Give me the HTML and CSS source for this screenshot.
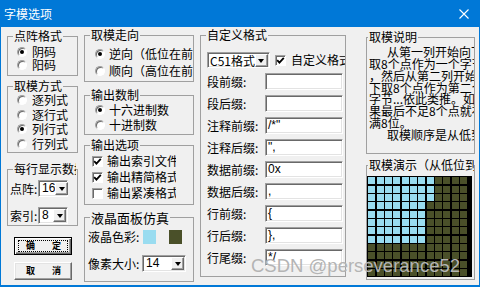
FILE: index.html
```html
<!DOCTYPE html>
<html lang="zh-CN">
<head>
<meta charset="utf-8">
<title>字模选项</title>
<link rel="stylesheet" href="styles.css">
</head>
<body>
<div class="window">
  <div class="titlebar">
    <span class="title">字模选项</span>
    <svg class="close" width="10" height="10" viewBox="0 0 10 10"><path d="M0.5 0.5 L9.5 9.5 M9.5 0.5 L0.5 9.5" stroke="#fff" stroke-width="1.1" fill="none"/></svg>
  </div>
  <div class="client">
    <div class="col col1">
      <fieldset class="g">
        <legend>点阵格式</legend>
        <div class="body b-dot">
          <div class="opt"><span class="radio on"></span>阴码</div>
          <div class="opt"><span class="radio"></span>阳码</div>
        </div>
      </fieldset>
      <fieldset class="g g-mode">
        <legend>取模方式</legend>
        <div class="body b-mode">
          <div class="opt"><span class="radio"></span>逐列式</div>
          <div class="opt"><span class="radio"></span>逐行式</div>
          <div class="opt"><span class="radio on"></span>列行式</div>
          <div class="opt"><span class="radio"></span>行列式</div>
        </div>
      </fieldset>
      <fieldset class="g g-row">
        <legend class="clip">每行显示数据</legend>
        <div class="body b-row">
          <div class="fld"><span class="lbl">点阵:</span><div class="select s-small"><span class="val">16</span><span class="drop"></span></div></div>
          <div class="fld f2"><span class="lbl">索引:</span><div class="select s-small"><span class="val">8</span><span class="drop"></span></div></div>
        </div>
      </fieldset>
      <div class="buttons">
        <div class="btn default"><div class="focus"><span>确</span><span>定</span></div></div>
        <div class="btn"><div class="focus nofocus"><span>取</span><span>消</span></div></div>
      </div>
    </div>

    <div class="col col2">
      <fieldset class="g">
        <legend>取模走向</legend>
        <div class="body b-dir">
          <div class="opt"><span class="radio on"></span>逆向（低位在前）</div>
          <div class="opt"><span class="radio"></span>顺向（高位在前）</div>
        </div>
      </fieldset>
      <fieldset class="g g-num">
        <legend>输出数制</legend>
        <div class="body b-num">
          <div class="opt"><span class="radio on"></span>十六进制数</div>
          <div class="opt"><span class="radio"></span>十进制数</div>
        </div>
      </fieldset>
      <fieldset class="g g-out">
        <legend>输出选项</legend>
        <div class="body b-out">
          <div class="opt"><span class="cb"><svg width="9" height="9" viewBox="0 0 9 9"><path d="M1.2 4.2 L3.4 6.6 L7.8 1.8" stroke="#000" stroke-width="1.8" fill="none"/></svg></span>输出索引文件</div>
          <div class="opt"><span class="cb"><svg width="9" height="9" viewBox="0 0 9 9"><path d="M1.2 4.2 L3.4 6.6 L7.8 1.8" stroke="#000" stroke-width="1.8" fill="none"/></svg></span>输出精简格式</div>
          <div class="opt"><span class="cb"></span>输出紧凑格式</div>
        </div>
      </fieldset>
      <fieldset class="g g-lcd">
        <legend class="big">液晶面板仿真</legend>
        <div class="body b-lcd">
          <div class="lcdrow"><span class="lbl2">液晶色彩:</span><span class="sw light"></span><span class="sw dark"></span></div>
          <div class="lcdrow r2"><span class="lbl2">像素大小:</span><div class="select s-px"><span class="val">14</span><span class="drop"></span></div></div>
        </div>
      </fieldset>
    </div>

    <div class="col col3">
      <fieldset class="g g-custom">
        <legend>自定义格式</legend>
        <div class="body b-custom">
          <div class="toprow">
            <div class="select s-fmt"><span class="val cjk">C51格式</span><span class="drop"></span></div>
            <span class="cb"><svg width="9" height="9" viewBox="0 0 9 9"><path d="M1.2 4.2 L3.4 6.6 L7.8 1.8" stroke="#000" stroke-width="1.8" fill="none"/></svg></span>
            <span class="cblbl">自定义格式</span>
          </div>
          <div class="frow"><span class="flbl">段前缀:</span><span class="input"></span></div>
          <div class="frow"><span class="flbl">段后缀:</span><span class="input"></span></div>
          <div class="frow"><span class="flbl">注释前缀:</span><span class="input">/*"</span></div>
          <div class="frow"><span class="flbl">注释后缀:</span><span class="input">",</span></div>
          <div class="frow"><span class="flbl">数据前缀:</span><span class="input">0x</span></div>
          <div class="frow"><span class="flbl">数据后缀:</span><span class="input">,</span></div>
          <div class="frow"><span class="flbl">行前缀:</span><span class="input">{</span></div>
          <div class="frow"><span class="flbl">行后缀:</span><span class="input">},</span></div>
          <div class="frow"><span class="flbl">行尾缀:</span><span class="input">*/</span></div>
        </div>
      </fieldset>
    </div>

    <div class="col col4">
      <fieldset class="g g-desc">
        <legend>取模说明</legend>
        <div class="body b-desc">
          <div class="desc">
            <div class="ln ind">从第一列开始向下</div>
            <div class="ln">取8个点作为一个字节</div>
            <div class="ln">，然后从第二列开始向</div>
            <div class="ln">下取8个点作为第二个</div>
            <div class="ln">字节...依此类推。如</div>
            <div class="ln">果最后不足8个点就补</div>
            <div class="ln">满8位。</div>
            <div class="ln ind">取模顺序是从低到高</div>
          </div>
        </div>
      </fieldset>
      <fieldset class="g g-demo">
        <legend class="clip2">取模演示（从低位到高位）</legend>
        <div class="body b-demo">
          <div class="lcd">
            <i class="l"></i><i class="l"></i><i class="l"></i><i class="l"></i><i class="l"></i><i class="l"></i><i class="l"></i><i class="l"></i><i></i><i></i><i></i><i></i>
            <i class="l"></i><i class="l"></i><i class="l"></i><i class="l"></i><i class="l"></i><i class="l"></i><i class="l"></i><i class="l"></i><i></i><i></i><i></i><i></i>
            <i class="l"></i><i class="l"></i><i class="l"></i><i class="l"></i><i class="l"></i><i class="l"></i><i class="l"></i><i class="l"></i><i></i><i></i><i></i><i></i>
            <i class="l"></i><i class="l"></i><i class="l"></i><i class="l"></i><i class="l"></i><i class="l"></i><i class="l"></i><i></i><i></i><i></i><i></i><i></i>
            <i class="l"></i><i class="l"></i><i class="l"></i><i class="l"></i><i class="l"></i><i class="l"></i><i class="l"></i><i></i><i></i><i></i><i></i><i></i>
            <i class="l"></i><i class="l"></i><i class="l"></i><i class="l"></i><i class="l"></i><i class="l"></i><i class="l"></i><i></i><i></i><i></i><i></i><i></i>
            <i class="l"></i><i class="l"></i><i class="l"></i><i class="l"></i><i class="l"></i><i class="l"></i><i class="l"></i><i></i><i></i><i></i><i></i><i></i>
            <i class="l"></i><i class="l"></i><i class="l"></i><i class="l"></i><i class="l"></i><i class="l"></i><i class="l"></i><i></i><i></i><i></i><i></i><i></i>
            <i></i><i></i><i></i><i></i><i></i><i></i><i></i><i></i><i></i><i></i><i></i><i></i>
            <i></i><i></i><i></i><i></i><i></i><i></i><i></i><i></i><i></i><i></i><i></i><i></i>
            <i></i><i></i><i></i><i></i><i></i><i></i><i></i><i></i><i></i><i></i><i></i><i></i>
            <i></i><i></i><i></i><i></i><i></i><i></i><i></i><i></i><i></i><i></i><i></i><i></i>
          </div>
        </div>
      </fieldset>
    </div>
  </div>
  <div class="watermark">CSDN @perseverance52</div>
</div>
</body>
</html>
```

FILE: styles.css
```css
* { box-sizing: border-box; }
html, body { margin: 0; padding: 0; }
body {
  width: 480px; height: 287px; overflow: hidden; background: #fff;
  font-family: "Noto Sans CJK SC", "Noto Sans", sans-serif;
  font-size: 12px; color: #000;
}
.window {
  position: relative; width: 480px; height: 287px;
  display: flex; flex-direction: column;
  background: #f0f0f0;
  border: 1px solid #0078d7; border-top: 0; border-bottom-width: 2px;
}
.titlebar {
  height: 27px; flex: none; background: #0078d7; color: #fff;
  display: flex; align-items: center; justify-content: space-between;
  padding: 0 10px 0 3px;
}
.title { font-size: 12px; line-height: 14px; }
.close { display: block; }

.client { flex: 1; display: flex; align-items: flex-start; padding-left: 6px; overflow: hidden; }
.col { display: flex; flex-direction: column; flex: none; }
.col1 { width: 71px; padding-top: 2px; }
.col2 { width: 110px; margin-left: 6px; padding-top: 1px; }
.col3 { width: 146px; margin-left: 6px; padding-top: 1px; }
.col4 { width: 109px; margin-left: 20px; padding-top: 3px; }

.g {
  margin: 0; padding: 0; min-width: 0;
  border: 1px solid #a0a0a0;
}
.g legend {
  margin-left: 5px; padding: 0 1px;
  font-size: 12px; line-height: 14px; white-space: nowrap;
}
.g legend.clip { max-width: 63px; overflow: hidden; }
.g legend.big { font-size: 13px; line-height: 15px; }
.g-desc legend, .g-demo legend { margin-left: 1px; }
.g legend.clip2 { max-width: 106px; overflow: hidden; }

.body { overflow: hidden; white-space: nowrap; }

.opt { display: flex; align-items: center; gap: 5px; line-height: 14px; }
.radio {
  flex: none; width: 10px; height: 10px; border-radius: 50%;
  background: #fff; border: 1px solid;
  border-color: #a0a0a0 #fff #fff #a0a0a0;
  box-shadow: inset 1px 1px #696969;
  display: flex; align-items: center; justify-content: center;
}
.radio.on::after { content: ""; width: 4px; height: 4px; border-radius: 50%; background: #000; }
.cb {
  flex: none; width: 11px; height: 11px; background: #fff;
  border: 1px solid; border-color: #a0a0a0 #fff #fff #a0a0a0;
  box-shadow: inset 1px 1px #696969;
  display: flex; align-items: center; justify-content: center;
}
.cb svg { display: block; }

/* col1 */
.b-dot { padding: 3px 0 4px 9px; }
.b-dot .opt { height: 12.5px; }
.g-mode { margin-top: 3px; }
.b-mode { padding: 0 0 1px 9px; }
.b-mode .opt { height: 14.5px; }
.g-row { margin-top: 9px; }
.b-row { padding: 4px 0 1px 2px; }
.fld { display: flex; align-items: center; height: 17px; }
.fld.f2 { margin-top: 10px; }
.lbl { width: 28px; line-height: 14px; }

.select {
  display: flex; height: 17px; background: #fff;
  border: 1px solid; border-color: #a0a0a0 #fff #fff #a0a0a0;
  box-shadow: inset 1px 1px #696969, inset -1px -1px #e3e3e3;
  padding: 1px;
}
.select .val {
  flex: 1; padding-left: 2px; line-height: 13px;
  font-family: "Liberation Sans", Arial, sans-serif; font-size: 12px;
}
.select .val.cjk { font-family: "Noto Sans CJK SC", sans-serif; padding-left: 1px; }
.drop {
  flex: none; width: 13px; height: 13px; background: #f0f0f0;
  border: 1px solid; border-color: #fff #696969 #696969 #fff;
  box-shadow: inset -1px -1px #a0a0a0;
  display: flex; align-items: center; justify-content: center;
}
.drop::after {
  content: ""; width: 0; height: 0; margin-top: 1px;
  border-left: 3.5px solid transparent; border-right: 3.5px solid transparent;
  border-top: 4px solid #000;
}
.s-small { width: 30px; }
.s-px { width: 44px; }
.s-fmt { width: 71px; height: 16px; }

.buttons { display: flex; flex-direction: column; gap: 7px; margin: 11px 0 0 7px; }
.btn {
  width: 58px; height: 18px; background: #f0f0f0;
  border: 1px solid; border-color: #fff #696969 #696969 #fff;
  box-shadow: inset -1px -1px #a0a0a0, inset 1px 1px #e3e3e3;
  padding: 2px 3px;
}
.btn.default { border: 1px solid #000; box-shadow: inset 1px 1px #fff, inset -1px -1px #696969, inset -2px -2px #a0a0a0; }
.focus {
  height: 100%; border: 1px dotted #000;
  display: flex; align-items: center; justify-content: space-between;
  padding: 0 6px 0 7px;
  font-size: 9px; font-weight: bold; line-height: 10px;
}
.focus.nofocus { border-color: transparent; }

/* col2 */
.b-dir { padding: 3px 0 2px 10px; }
.b-dir .opt { height: 17px; gap: 4px; }
.g-num { margin-top: 6px; }
.b-num { padding: 0 0 2px 10px; }
.b-num .opt { height: 15px; gap: 4px; }
.g-out { margin-top: 3px; }
.b-out { padding: 1px 0 3px 7px; width: 91px; }
.b-out .opt { height: 16px; gap: 4px; }
.g-lcd { margin-top: 5px; }
.b-lcd { padding: 1px 0 9px 3px; }
.lcdrow { display: flex; align-items: center; height: 22px; }
.lcdrow.r2 { height: 17px; margin-top: 7px; }
.lbl2 { width: 55px; line-height: 14px; }
.r2 .lbl2 { width: 54px; }
.sw { width: 13px; height: 14px; flex: none; }
.sw.light { background: #99dcf0; }
.sw.dark { background: #4a5029; margin-left: 13px; }

/* col3 */
.b-custom { padding: 10px 1px 10px 6px; }
.toprow { display: flex; align-items: center; height: 16px; }
.toprow .cb { margin-left: 5px; }
.cblbl { margin-left: 5px; line-height: 14px; }
.frow { display: flex; align-items: center; height: 17px; margin-top: 5px; }
.flbl { width: 58px; flex: none; line-height: 14px; }
.input {
  flex: none; width: 78px; height: 17px; background: #fff;
  border: 1px solid; border-color: #a0a0a0 #fff #fff #a0a0a0;
  box-shadow: inset 1px 1px #696969, inset -1px -1px #e3e3e3;
  padding-left: 2px; line-height: 15px;
  font-family: "Liberation Sans", Arial, sans-serif; font-size: 12px;
}

/* col4 */
.b-desc { padding: 2px 0 0 2px; }
.desc { height: 107px; overflow: hidden; }
.ln { line-height: 11.85px; height: 11.85px; white-space: nowrap; }
.ln.ind { padding-left: 18px; }
.g-demo { margin-top: 4px; }
.b-demo { padding: 4px 1px 2px 0; }
.lcd {
  width: 105px; height: 101px; background: #000;
  display: grid; grid-template-columns: repeat(12, 7px); grid-auto-rows: 7px;
  gap: 1.33px; padding: 1.3px 0 0 1.3px;
}
.lcd i { display: block; background: #4a5029; }
.lcd i.l { background: #99dcf0; }

.watermark {
  position: absolute; left: 250px; top: 257px;
  font-family: "Liberation Sans", Arial, sans-serif; font-size: 18.5px; line-height: 18px;
  color: #b4b4b4; white-space: nowrap; pointer-events: none;
}
```
